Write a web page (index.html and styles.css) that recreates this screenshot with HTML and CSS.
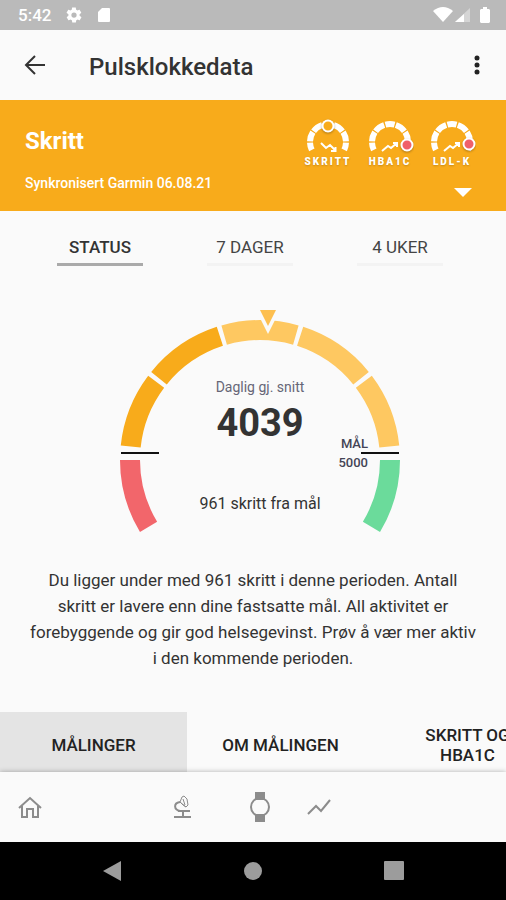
FILE: index.html
```html
<!DOCTYPE html>
<html lang="no">
<head>
    <meta charset="UTF-8">
    <meta name="viewport" content="width=device-width, initial-scale=1.0">
    <title>Pulsklokkedata</title>
    <link rel="stylesheet" href="styles.css">
</head>
<body>
    <div class="status-bar">
        <span class="clock">5:42</span>
        <svg class="status-icon" width="18" height="18" viewBox="0 0 24 24"><path d="M19.4 13c0-.3.1-.6.1-1s0-.7-.1-1l2.100-1.600c.2-.2.2-.4.100-.6l-2-3.500c-.1-.2-.4-.3-.6-.2l-2.500 1c-.5-.4-1.100-.7-1.700-1l-.4-2.600c0-.3-.2-.5-.5-.5h-4c-.2 0-.5.2-.5.500l-.4 2.600c-.6.300-1.200.600-1.700 1l-2.500-1c-.2-.1-.5 0-.6.200l-2 3.500c-.1.200-.1.500.1.600L4.600 11c0 .300-.1.600-.1 1s0 .700.100 1l-2.100 1.600c-.2.200-.2.400-.1.600l2 3.500c.1.200.4.300.6.200l2.500-1c.5.400 1.100.700 1.700 1l.4 2.600c0 .300.300.500.500.500h4c.2 0 .5-.2.500-.5l.4-2.600c.6-.3 1.200-.6 1.700-1l2.500 1c.2.100.5 0 .6-.2l2-3.500c.1-.2.1-.5-.1-.6L19.400 13zM12 15.500a3.500 3.500 0 1 1 0-7 3.500 3.500 0 0 1 0 7z"/></svg>
        <svg class="status-icon" width="14" height="18" viewBox="0 0 14 18"><path d="M5 2h7a1 1 0 0 1 1 1v12a1 1 0 0 1-1 1H2a1 1 0 0 1-1-1V6z"/></svg>
        <div class="signal">
            <svg class="status-icon" width="20" height="18" viewBox="0 0 20 18"><path d="M0 5Q10-3 20 5L10 16z"/></svg>
            <svg class="status-icon" width="15" height="18" viewBox="0 0 15 18"><path opacity=".4" d="M15 2v14H0z"/><path d="M9 8v8H0z"/></svg>
            <svg class="status-icon battery" width="10" height="18" viewBox="0 0 10 18"><path d="M3 1h4v2h2l1 1v12l-1 1H1l-1-1V4l1-1h2z"/></svg>
        </div>
    </div>

    <header class="app-bar">
        <button class="icon-btn" aria-label="Tilbake">
            <svg width="22" height="22" viewBox="0 0 22 22" fill="none" stroke="#333" stroke-width="2"><path d="M21 11H2M11 2l-9 9 9 9"/></svg>
        </button>
        <h1>Pulsklokkedata</h1>
        <button class="icon-btn" aria-label="Meny">
            <svg width="6" height="22" viewBox="0 0 6 22" fill="#222"><circle cx="3" cy="4" r="2.500"/><circle cx="3" cy="11" r="2.500"/><circle cx="3" cy="18" r="2.500"/></svg>
        </button>
    </header>

    <section class="banner">
        <div class="banner-text">
            <h2>Skritt</h2>
            <p>Synkronisert Garmin 06.08.21</p>
        </div>
        <div class="banner-side">
            <div class="minis">
                <button class="mini">
                    <svg width="48" height="38" viewBox="0 0 48 38">
                        <circle class="mini-arc" cx="24" cy="26" r="18" pathLength="360"/>
                        <path class="mini-trend" d="M17 27l5 5 4-3 5 5M27 35h4.500v-4"/>
                        <circle class="knob" cx="24" cy="10" r="5.500"/>
                    </svg>
                    <span>SKRITT</span>
                </button>
                <button class="mini">
                    <svg width="48" height="38" viewBox="0 0 48 38">
                        <circle class="mini-arc" cx="24" cy="26" r="18" pathLength="360"/>
                        <path class="mini-trend" d="M16 35l6-5 3 2 6-5M27 27h4v4"/>
                        <circle class="knob red" cx="41" cy="29" r="5.500"/>
                    </svg>
                    <span>HBA1C</span>
                </button>
                <button class="mini">
                    <svg width="48" height="38" viewBox="0 0 48 38">
                        <circle class="mini-arc" cx="24" cy="26" r="18" pathLength="360"/>
                        <path class="mini-trend" d="M16 35l6-5 3 2 6-5M27 27h4v4"/>
                        <circle class="knob red" cx="41" cy="28" r="5.500"/>
                    </svg>
                    <span>LDL-K</span>
                </button>
            </div>
            <button class="expand" aria-label="Vis mer">
                <svg width="20" height="10" viewBox="0 0 20 10" fill="#fff"><path d="M1 0h18l-9 9z"/></svg>
            </button>
        </div>
    </section>

    <main>
        <nav class="periods">
            <button class="period active">STATUS</button>
            <button class="period">7 DAGER</button>
            <button class="period">4 UKER</button>
        </nav>

        <div class="gauge">
            <!-- segments are dashes on a circle measured in degrees, 0 = right, clockwise -->
            <svg width="284" height="230" viewBox="0 0 284 230">
                <g class="segments">
                    <circle class="low" cx="142" cy="152" r="130" pathLength="360" stroke-dasharray="31 329" stroke-dashoffset="-149"/>
                    <circle class="done" cx="142" cy="152" r="130" pathLength="360" stroke-dasharray="31 329" stroke-dashoffset="-186"/>
                    <circle class="done" cx="142" cy="152" r="130" pathLength="360" stroke-dasharray="33 327" stroke-dashoffset="-219"/>
                    <circle class="left" cx="142" cy="152" r="130" pathLength="360" stroke-dasharray="32 328" stroke-dashoffset="-254"/>
                    <circle class="left" cx="142" cy="152" r="130" pathLength="360" stroke-dasharray="33 327" stroke-dashoffset="-288"/>
                    <circle class="left" cx="142" cy="152" r="130" pathLength="360" stroke-dasharray="31 329" stroke-dashoffset="-323"/>
                    <circle class="goal" cx="142" cy="152" r="130" pathLength="360" stroke-dasharray="31 329"/>
                </g>
                <path class="pointer-gap" d="M139 4h22l-11 22z"/>
                <path class="pointer" d="M142 2h16l-8 16z"/>
                <path class="limit" d="M3 145h38M243 145h38"/>
                <text class="caption" x="142" y="84">Daglig gj. snitt</text>
                <text class="value" x="142" y="128">4039</text>
                <text class="diff" x="142" y="201">961 skritt fra mål</text>
                <text class="target" x="250" y="140">MÅL</text>
                <text class="target" x="250" y="159">5000</text>
            </svg>
        </div>

        <p class="summary">Du ligger under med 961 skritt i denne perioden. Antall skritt er lavere enn dine fastsatte mål. All aktivitet er forebyggende og gir god helsegevinst. Prøv å vær mer aktiv i den kommende perioden.</p>

        <div class="topics">
            <button class="topic active">MÅLINGER</button>
            <button class="topic">OM MÅLINGEN</button>
            <button class="topic">SKRITT OG HBA1C</button>
        </div>
    </main>

    <nav class="bottom-nav">
        <a href="#" class="home" aria-label="Hjem">
            <svg width="24" height="24" viewBox="0 0 24 24"><path d="M1 13L12 3l11 10M4 11v11h5v-8h6v8h5V11"/></svg>
        </a>
        <a href="#" class="lab" aria-label="Lab">
            <svg width="24" height="24" viewBox="0 0 24 24"><path d="M3 22h17M12 17v5M7 16h12M9 16C3 15 2 8 9 7"/><path class="lens" d="M9 7l2-5 2-1 3 3 1 6-2 2zM9 7l3 3 3 2M12 4l2 6"/></svg>
        </a>
        <a href="#" class="watch" aria-label="Klokke">
            <svg width="24" height="32" viewBox="0 0 24 32"><path class="strap" d="M7 1h10v8H7zM7 23h10v8H7z"/><circle cx="12" cy="16" r="9"/></svg>
        </a>
        <a href="#" class="trend" aria-label="Trend">
            <svg width="24" height="24" viewBox="0 0 24 24"><path d="M1 19l8-8 5 5L23 5"/></svg>
        </a>
    </nav>

    <div class="system-bar">
        <button aria-label="Tilbake"><svg width="20" height="20" viewBox="0 0 20 20"><path d="M19 0v20L1 10z"/></svg></button>
        <button aria-label="Hjem"><svg width="20" height="20" viewBox="0 0 20 20"><circle cx="10" cy="10" r="9"/></svg></button>
        <button aria-label="Oversikt"><svg width="20" height="20" viewBox="0 0 20 20"><rect width="20" height="19" rx="1"/></svg></button>
    </div>
</body>
</html>
```

FILE: styles.css
```css
* {
    box-sizing: border-box;
}
body {
    margin: 0;
    min-height: 100vh;
    display: flex;
    flex-direction: column;
    font-family: Roboto, "Liberation Sans", sans-serif;
    background-color: #fafafa;
    color: #333;
    overflow-x: hidden;
}
h1, h2, p {
    margin: 0;
}
button {
    font-family: inherit;
    color: inherit;
    background: none;
    border: none;
    padding: 0;
    cursor: pointer;
}
svg {
    display: block;
}

/* Status bar */
.status-bar {
    display: flex;
    align-items: center;
    gap: 14px;
    height: 30px;
    padding: 0 16px 0 18px;
    background-color: #bababa;
    color: #fff;
}
.clock {
    font-size: 17px;
    font-weight: 500;
}
.status-icon {
    fill: #fff;
}
.signal {
    display: flex;
    gap: 2px;
    margin-left: auto;
}
.battery {
    margin-left: 8px;
}

/* App bar */
.app-bar {
    display: flex;
    align-items: center;
    height: 70px;
    padding: 0 26px 0 24px;
}
.app-bar h1 {
    flex: 1;
    margin-left: 43px;
    padding-top: 3px;
    font-size: 24px;
    line-height: 28px;
    font-weight: 500;
}

/* Banner */
.banner {
    display: flex;
    justify-content: space-between;
    height: 111px;
    padding: 0 23px 0 25px;
    background-color: #f8ab1b;
    color: #fff;
}
.banner-text {
    padding-top: 27px;
}
.banner h2 {
    font-size: 24px;
    line-height: 28px;
    font-weight: 700;
}
.banner p {
    margin-top: 18px;
    font-size: 14px;
    line-height: 20px;
    font-weight: 500;
}
.banner-side {
    display: flex;
    flex-direction: column;
    padding-top: 16px;
}
.minis {
    display: flex;
}
.mini {
    display: flex;
    flex-direction: column;
    align-items: center;
    width: 62px;
}
.mini span {
    margin-top: 2px;
    font-size: 10px;
    line-height: 12px;
    font-weight: 900;
    letter-spacing: 2px;
    text-shadow: 0 1px 2px rgba(0, 0, 0, 0.2);
}
.mini-arc {
    fill: none;
    stroke: #fff;
    stroke-width: 6;
    stroke-dasharray: 24 4 31 4 34 4 30 4 34 4 31 4 24 128;
    stroke-dashoffset: -154;
}
.mini-trend {
    fill: none;
    stroke: #fff;
    stroke-width: 2;
}
.knob {
    fill: #f8ab1b;
    stroke: #fff;
    stroke-width: 2;
    filter: drop-shadow(0 1px 1px rgba(0, 0, 0, 0.3));
}
.knob.red {
    fill: #f0606a;
}
.expand {
    align-self: flex-end;
    margin: 20px 10px 0 0;
}

/* Period tabs */
main {
    flex: 1;
    display: flex;
    flex-direction: column;
}
.periods {
    display: flex;
    justify-content: center;
    gap: 64px;
    padding: 25px 6px 0 0;
}
.period {
    width: 86px;
    padding-bottom: 5px;
    border-bottom: 3px solid #f3f3f3;
    font-size: 17px;
    line-height: 22px;
    color: #444;
}
.period.active {
    border-bottom-color: #aaa;
    font-weight: 500;
    color: #333;
}

/* Gauge */
.gauge {
    display: flex;
    justify-content: center;
    margin-top: 42px;
    padding-left: 14px;
}
.segments {
    fill: none;
    stroke-width: 20;
}
.low {
    stroke: #f2666b;
}
.done {
    stroke: #f8ab1b;
}
.left {
    stroke: #fec861;
}
.goal {
    stroke: #6bdb9b;
}
.pointer {
    fill: #fdbf50;
}
.pointer-gap {
    fill: #fafafa;
}
.limit {
    stroke: #111;
    stroke-width: 2;
}
.gauge text {
    text-anchor: middle;
    fill: #333;
}
.gauge .caption {
    font-size: 14px;
    fill: #667;
}
.gauge .value {
    font-size: 38px;
    font-weight: 700;
}
.gauge .diff {
    font-size: 16px;
}
.gauge .target {
    font-size: 13px;
    font-weight: 500;
    text-anchor: end;
    fill: #445;
}

.summary {
    margin: 29px 28px 0;
    font-size: 17px;
    line-height: 26px;
    text-align: center;
}

/* Topic tabs */
.topics {
    display: flex;
    margin-top: auto;
    overflow-x: auto;
    scrollbar-width: none;
}
.topic {
    flex: 0 0 187px;
    height: 60px;
    padding: 6px 32px 0;
    font-size: 17px;
    line-height: 20px;
    font-weight: 500;
    color: #222;
}
.topic.active {
    background-color: #e4e4e4;
}

/* Bottom navigation */
.bottom-nav {
    display: flex;
    align-items: center;
    height: 70px;
    padding-left: 18px;
    background-color: #fafafa;
    box-shadow: 0 0 5px rgba(0, 0, 0, 0.3);
    z-index: 1;
}
.bottom-nav svg {
    fill: none;
    stroke: #8c8c8c;
    stroke-width: 2;
}
.bottom-nav .strap {
    fill: #8c8c8c;
    stroke: none;
}
.bottom-nav .lens {
    stroke-width: 1;
}
.lab {
    margin-left: 129px;
}
.watch {
    margin-left: 53px;
}
.trend {
    margin-left: 35px;
}

/* System bar */
.system-bar {
    display: flex;
    align-items: center;
    justify-content: center;
    gap: 121px;
    height: 58px;
    background-color: #000;
    z-index: 2;
}
.system-bar svg {
    fill: #9c9c9c;
}
```
